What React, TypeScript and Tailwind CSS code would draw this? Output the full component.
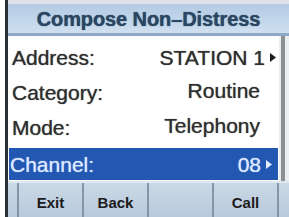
import React from 'react';

const rows = [
  { label: 'Address:', value: 'STATION 1', arrow: true },
  { label: 'Category:', value: 'Routine', arrow: false },
  { label: 'Mode:', value: 'Telephony', arrow: false },
  { label: 'Channel:', value: '08', arrow: true, active: true },
];

function Arrow({ light }: { light?: boolean }) {
  return (
    <svg width="6" height="9" viewBox="0 0 6 9" className="ml-[5px] shrink-0">
      <path d="M0 0 L6 4.5 L0 9 Z" fill={light ? '#e4eeff' : '#1c1c1c'} />
    </svg>
  );
}

export default function App() {
  return (
    <div className="flex h-[217px] w-[289px] overflow-hidden bg-white font-['Liberation_Sans',Arial,sans-serif]">
      <div className="w-[5px] shrink-0 bg-white" />
      <div className="w-[3px] shrink-0 bg-[#2b3036]" />
      <div className="flex min-w-0 flex-1 flex-col">
        <div className="h-[4px] bg-[#dfe3e7]" />
        <div className="flex h-[32px] items-center justify-center border-b-[3px] border-[#8ea9c6] bg-gradient-to-b from-[#b3cbe4] to-[#cfdff0]">
          <span className="text-[20px] font-bold tracking-[-0.1px] text-[#2a4663] [text-shadow:0_0_1px_#2a4663]">
            Compose Non–Distress
          </span>
        </div>
        <div className="flex flex-1">
          <div className="flex w-[271px] flex-col pt-[4px]">
            {rows.map((r) => (
              <div
                key={r.label}
                className={
                  r.active
                    ? 'mx-[1px] mt-[3px] flex h-[32px] items-center justify-between bg-[#2257b2] pl-[1px] pr-[3px] text-[#dce9ff] [text-shadow:0_0_1px_#c8dcff]'
                    : 'flex h-[35px] items-center justify-between pl-[4px] text-[#2e2e2e] [text-shadow:0_0_1px_#555]'
                }
              >
                <span className="text-[21px] leading-none">{r.label}</span>
                <span className={r.arrow ? 'flex items-center pr-[3px]' : 'pr-[19px]'}>
                  <span className="text-[21px] leading-none">{r.value}</span>
                  {r.arrow && <Arrow light={r.active} />}
                </span>
              </div>
            ))}
          </div>
          <div className="flex flex-1 bg-[#eceeef] pl-[2px]">
            <div className="w-[4px] bg-[#8c9095]" />
          </div>
        </div>
        <div className="flex h-[36px] border-t-[2px] border-[#dfe7ef] bg-gradient-to-b from-[#cbd9e6] to-[#b7c9db]">
          <div className="w-[9px] shrink-0" />
          {['Exit', 'Back', '', 'Call'].map((b, i) => (
            <div
              key={i}
              className="flex w-[65px] items-center justify-center border-l-[2px] border-[#8595a5] pt-[6px] text-[15px] font-bold text-[#1b1b1b]"
            >
              {b}
            </div>
          ))}
          <div className="flex-1 border-l-[2px] border-[#8595a5]" />
        </div>
      </div>
    </div>
  );
}
